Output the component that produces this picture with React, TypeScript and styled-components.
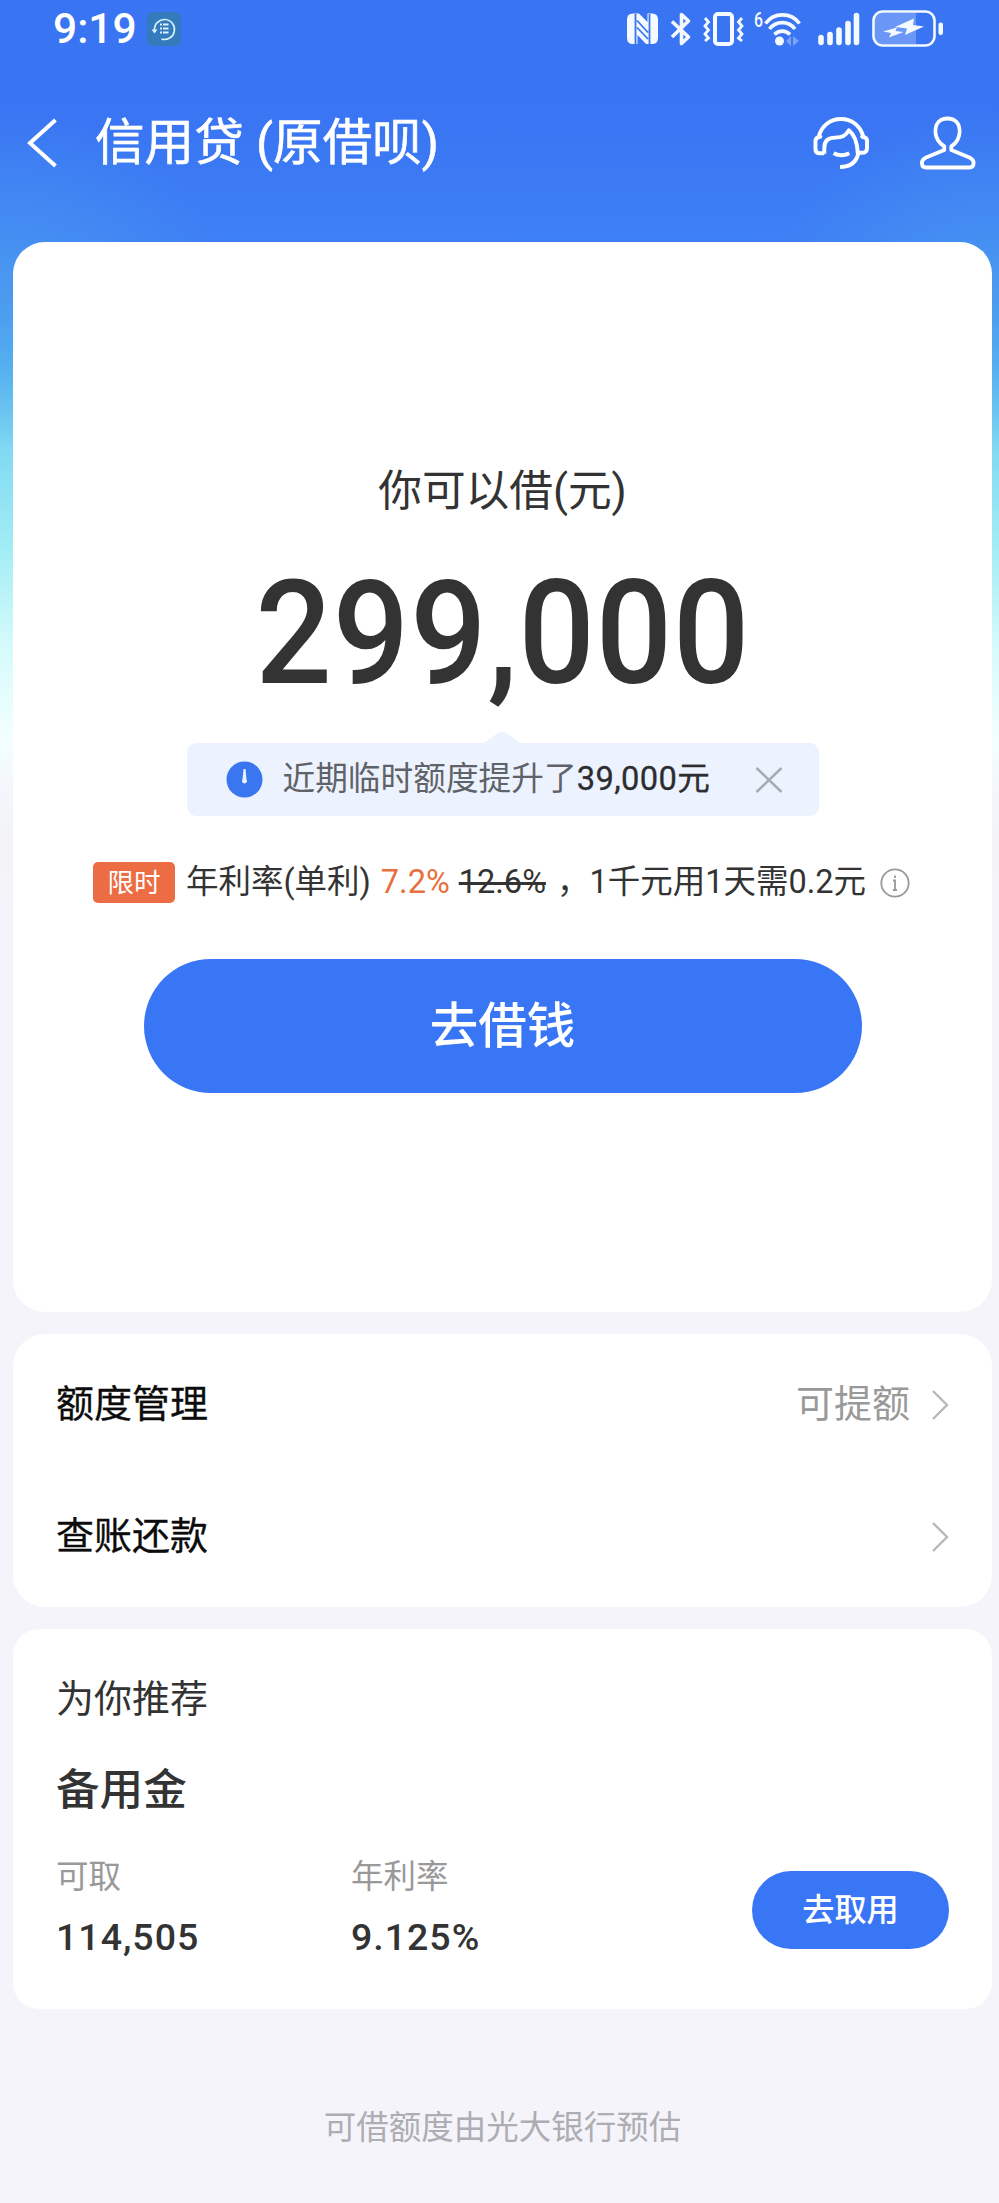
import React from 'react';
import styled, { createGlobalStyle } from 'styled-components';

const Global = createGlobalStyle`
  * { box-sizing: border-box; }
  body {
    margin: 0;
    background: #f4f4fa;
    font-family: Roboto, 'Noto Sans CJK SC', sans-serif;
    color: #333;
  }
  svg { display: block; flex: none; overflow: visible; }
  button { border: 0; padding: 0; background: none; font: inherit; color: inherit; cursor: pointer; }
`;

const Page = styled.main`
  width: 999px;
  height: 2203px;
  overflow: hidden;
  padding: 0 7px 0 13px;
  background:
    radial-gradient(ellipse 220px 170px at 0 280px, rgba(80, 168, 238, 0.5), rgba(80, 168, 238, 0) 100%) no-repeat,
    radial-gradient(ellipse 220px 170px at 100% 280px, rgba(80, 168, 238, 0.5), rgba(80, 168, 238, 0) 100%) no-repeat,
    linear-gradient(
      #3974f3 0, #3a76f3 130px, #3e80f5 242px, #448cf0 290px, #56b0f0 362px, #80daf2 450px,
      #a5eef5 555px, #d5fafb 645px, #f3fffe 740px, #f3f6fb 790px, #f3f3f7 850px, #f4f4fa 900px
    );
`;

const StatusBar = styled.div`
  display: flex;
  align-items: center;
  height: 57px;
  padding-left: 40px;
`;

const Clock = styled.time`
  width: 94px;
  font-size: 42.5px;
  line-height: 57px;
  font-weight: 500;
  color: #fff;
`;

const StatusIcons = styled.div`
  display: flex;
  align-items: center;
  margin-left: 446px;
  color: #f4faff;
`;

const Spaced = styled.span<{ $left: number }>`
  display: block;
  margin-left: ${p => p.$left}px;
`;

const NavBar = styled.header`
  display: flex;
  align-items: center;
  height: 172px;
  padding: 0 16px 0 14px;
  color: #fff;
`;

const NavTitle = styled.h1`
  flex: 1;
  margin: 0 0 0 38px;
  font-size: 49.6px;
  line-height: 58px;
  font-weight: 400;
  -webkit-text-stroke: 0.6px currentColor;
`;

const NavActions = styled.div`
  display: flex;
  gap: 50px;
`;

const Card = styled.section<{ $radius?: number }>`
  background: #fff;
  border-radius: ${p => p.$radius ?? 32}px;
`;

const QuotaCard = styled(Card)`
  display: flex;
  flex-direction: column;
  align-items: center;
  height: 1070px;
  margin-top: 13px;
  padding-top: 219px;
`;

const QuotaLabel = styled.div`
  font-size: 43.7px;
  line-height: 60px;
`;

const Amount = styled.div`
  margin-top: 37px;
  font-size: 145px;
  line-height: 150px;
  font-weight: 500;
  letter-spacing: 1px;
  transform: scaleX(0.927);
`;

const Tip = styled.div`
  position: relative;
  display: flex;
  align-items: center;
  width: 632px;
  height: 73px;
  margin-top: 35px;
  padding: 0 36px 0 39px;
  border-radius: 9px;
  background: #edf3fe;
`;

const TipArrow = styled.svg`
  position: absolute;
  left: 293px;
  top: -12px;
`;

const TipText = styled.div`
  flex: 1;
  margin-left: 20px;
  font-size: 32.7px;
  line-height: 73px;
  color: #5f6268;
  b { font-weight: 400; color: #2c2d30; -webkit-text-stroke: 0.3px currentColor; letter-spacing: 0.4px; }
`;

const RateRow = styled.div`
  display: flex;
  align-items: center;
  height: 43px;
  margin-top: 45px;
  margin-right: 2px;
  font-size: 32.5px;
  line-height: 43px;
  white-space: nowrap;
`;

const Tag = styled.span`
  width: 82px;
  height: 41px;
  margin-right: 11px;
  border-radius: 5px;
  background: #ec6d43;
  color: #fff;
  font-size: 26.5px;
  line-height: 41px;
  text-align: center;
`;

const Rate = styled.span`
  margin-left: 10px;
  color: #e87040;
`;

const OldRate = styled.s`
  margin-left: 9px;
  text-decoration-thickness: 3px;
`;

const Note = styled.span`
  margin: 0 14px 0 11px;
`;

const PillButton = styled.button<{ $size: 'large' | 'small' }>`
  width: ${p => (p.$size === 'large' ? 718 : 197)}px;
  height: ${p => (p.$size === 'large' ? 134 : 78)}px;
  padding-top: ${p => (p.$size === 'large' ? 3 : 0)}px;
  border-radius: 67px;
  background: #3976f5;
  color: #fff;
  font-size: ${p => (p.$size === 'large' ? 48.5 : 32.2)}px;
  line-height: 1.2;
  font-weight: 500;
`;

const BorrowButton = styled(PillButton)`
  margin-top: 55px;
`;

const MenuCard = styled(Card)`
  height: 273px;
  margin-top: 22px;
  padding: 5px 43px 0;
`;

const MenuRow = styled.div`
  display: flex;
  align-items: center;
  height: 132px;
  font-size: 38px;
  line-height: 48px;
  color: #0c0c0c;
`;

const MenuLabel = styled.span`
  flex: 1;
  margin-top: -2px;
  -webkit-text-stroke: 0.3px currentColor;
`;

const MenuValue = styled.span`
  margin: -2px 22px 0 0;
  color: #999;
`;

const OfferCard = styled(Card)`
  height: 380px;
  margin-top: 22px;
  padding: 45px 43px 0;
`;

const OfferHeading = styled.div`
  font-size: 38px;
  line-height: 50px;
`;

const OfferName = styled.h2`
  margin: 37px 0 0;
  font-size: 43.6px;
  line-height: 60px;
  font-weight: 500;
`;

const OfferBody = styled.div`
  display: flex;
  margin-top: 36px;
`;

const Stat = styled.div<{ $width: number }>`
  width: ${p => p.$width}px;
`;

const StatLabel = styled.div`
  font-size: 32.5px;
  line-height: 40px;
  color: #999;
`;

const StatValue = styled.div`
  margin-top: 16px;
  font-size: 37.5px;
  line-height: 48px;
  font-weight: 500;
  letter-spacing: 1px;
`;

const TakeButton = styled(PillButton)`
  margin: 14px 0 0 auto;
`;

const Footer = styled.footer`
  margin-top: 98px;
  font-size: 32.5px;
  line-height: 42px;
  text-align: center;
  color: #adadb2;
`;

const BackIcon = () => (
  <svg width="30" height="50" viewBox="0 0 30 50" fill="none" stroke="currentColor" strokeWidth="4">
    <path d="M28.5 2 3 25l25.500 23" />
  </svg>
);

const AppBadge = () => (
  <svg width="34" height="34" viewBox="0 0 34 34" fill="none" stroke="#d9f2fb" strokeWidth="1.6">
    <rect width="34" height="34" rx="6" fill="#347bbd" stroke="none" />
    <path d="M7.500 18a10 10 0 1 1 7 9" />
    <path d="m4.500 17.500 3 4 3-4Z" fill="#d9f2fb" stroke="none" />
    <path strokeWidth="2" d="M13 12.500h2m1 0h5.500M13 16.500h2m1 0h5.500M13 20.500h2m1 0h5.500" />
  </svg>
);

const NfcIcon = () => (
  <svg width="31" height="32" viewBox="0 0 31 32">
    <path fill="currentColor" d="M6 0.500H12L20.500 9V0.500H25q6 0 6 6V25q0 6-6 6h-6L10.500 22v9H6q-6 0-6-6V6.500q0-6 6-6Z" />
    <path fill="none" stroke="#3975f3" strokeWidth="1.800" d="M8.500 1v30M22.500 1v30M10 7.500 21 19.500M10 14.500 21 26" />
  </svg>
);

const BluetoothIcon = () => (
  <svg width="22" height="34" viewBox="0 0 22 34" fill="none" stroke="currentColor" strokeWidth="3.6" strokeLinejoin="round">
    <path d="M2 9.500 18.500 25 11.500 31.500V2.500l7 6.500L2 25" />
  </svg>
);

const VibrateIcon = () => (
  <svg width="41" height="34" viewBox="0 0 41 34" fill="none" stroke="currentColor">
    <rect x="12" y="2" width="17" height="30" rx="3" strokeWidth="4" />
    <path strokeWidth="2.800" d="m2 6 3.500 4L2 14l3.500 4L2 22l3.500 4L2 29M39 6l-3.500 4 3.500 4-3.500 4 3.500 4-3.500 4 3.500 3" />
  </svg>
);

const WifiIcon = () => (
  <svg width="48" height="36" viewBox="0 0 48 36" fill="none" stroke="currentColor" strokeWidth="3.600">
    <path d="M11.500 12.500a21 21 0 0 1 34 0M15.500 18a16 16 0 0 1 25.500 0M20.500 23.500a10.500 10.500 0 0 1 15.500 0" />
    <circle cx="25.500" cy="30" r="4.500" fill="currentColor" stroke="none" />
    <path fill="currentColor" stroke="none" opacity=".35" d="m37 25-5 5 5 5ZM39 25l6 5-6 5Z" />
    <text x="0" y="16" fontSize="20" fontWeight="500" fill="currentColor" stroke="none" textLength="9" lengthAdjust="spacingAndGlyphs">6</text>
  </svg>
);

const SignalIcon = () => (
  <svg width="42" height="34" viewBox="0 0 42 34" stroke="currentColor" strokeWidth="5.600" strokeLinecap="round">
    <path d="M3 25.500v5M12 22.500v8M21 18v12.500M30 11.500v19M38.500 3.500v27" />
  </svg>
);

const BatteryIcon = () => (
  <svg width="72" height="37" viewBox="0 0 72 37">
    <path fill="#fff" opacity=".25" d="M9 3h35v31H9q-6 0-6-6V9q0-6 6-6Z" />
    <rect x="1.500" y="1.500" width="61" height="34" rx="9" fill="none" stroke="currentColor" strokeWidth="2.600" />
    <rect x="66.500" y="12.500" width="4.500" height="12.500" rx="2.200" fill="currentColor" />
    <path fill="currentColor" d="m11 21.500 8 1.500-2 4.500 14.500-5.500-8-1 1.500-3.500ZM23 17l12 1.500-2 6.500 19-8.500-11-1.500 1-6.500Z" />
  </svg>
);

const ServiceIcon = () => (
  <svg width="57" height="54" viewBox="0 0 58 54" fill="none" stroke="currentColor" strokeWidth="4" strokeLinejoin="round">
    <path d="M6 20C9 9 18 2.500 28.500 2.500S48 9 51 20M11.500 37.500H7q-4.500 0-4.500-4.500v-8Q2.500 21 7 21l1-2M11.500 38v-6q0-10.500 11-10.500c7 0 10-1 14-7.500 5 4 8.500 10 9 23h4q5.500 0 5.500-5v-7q0-4-4.500-4l-1-2M46 38c-2 8.500-8 13.500-18.500 13.500M21 37.500q8 4 16 0" />
  </svg>
);

const UserIcon = () => (
  <svg width="56" height="54" viewBox="0 0 60 54" preserveAspectRatio="none" fill="none" stroke="currentColor" strokeWidth="4" strokeLinejoin="round">
    <path d="M26 34v-3.500C20 26.500 16.500 21 16.500 15.500c0-8 5-13 13-13s13 5 13 13c0 5.500-3 11-9 15V34l19.500 7.500q4.500 2 4.500 5.500 0 4.500-5 4.500h-46Q2 51.500 2 47q0-3.500 4.500-5.500Z" />
  </svg>
);

const AlertIcon = () => (
  <svg width="37" height="37" viewBox="0 0 37 37">
    <circle cx="18.500" cy="18.500" r="18" fill="#3976f0" />
    <path d="M17.500 8h2l1 10.500a2.500 2.500 0 1 1-4 0Z" fill="#e9f2ff" />
  </svg>
);

const CloseIcon = () => (
  <svg width="28" height="28" viewBox="0 0 28 28" stroke="#a6abb4" strokeWidth="2.600">
    <path d="m1.500 2 25 24M26.500 2l-25 24" />
  </svg>
);

const InfoIcon = () => (
  <svg width="30" height="30" viewBox="0 0 30 30" fill="none" stroke="#999" strokeWidth="1.800">
    <circle cx="15" cy="15" r="13.700" />
    <path d="M13 12.500h2v9.500M15 7.500v2.500M13 22h4" />
  </svg>
);

const ChevronIcon = () => (
  <svg width="17" height="30" viewBox="0 0 17 30" fill="none" stroke="#b8b8b8" strokeWidth="2.400">
    <path d="m1 1 14 14L1 29" />
  </svg>
);

export default function App() {
  return (
    <Page>
      <Global />
      <StatusBar>
        <Clock>9:19</Clock>
        <AppBadge />
        <StatusIcons>
          <NfcIcon />
          <Spaced $left={12}><BluetoothIcon /></Spaced>
          <Spaced $left={11}><VibrateIcon /></Spaced>
          <Spaced $left={10}><WifiIcon /></Spaced>
          <Spaced $left={16}><SignalIcon /></Spaced>
          <Spaced $left={12}><BatteryIcon /></Spaced>
        </StatusIcons>
      </StatusBar>
      <NavBar>
        <BackIcon />
        <NavTitle>信用贷 (原借呗)</NavTitle>
        <NavActions>
          <ServiceIcon />
          <UserIcon />
        </NavActions>
      </NavBar>
      <QuotaCard>
        <QuotaLabel>你可以借(元)</QuotaLabel>
        <Amount>299,000</Amount>
        <Tip>
          <TipArrow width="44" height="13" viewBox="0 0 44 13">
            <path d="M0 13Q5 12 8 9L18 2q4-3 8 0l10 7q3 3 8 4Z" fill="#edf3fe" />
          </TipArrow>
          <AlertIcon />
          <TipText>近期临时额度提升了<b>39,000元</b></TipText>
          <CloseIcon />
        </Tip>
        <RateRow>
          <Tag>限时</Tag>
          <span>年利率(单利)</span>
          <Rate>7.2%</Rate>
          <OldRate>12.6%</OldRate>
          <Note>，1千元用1天需0.2元</Note>
          <InfoIcon />
        </RateRow>
        <BorrowButton $size="large">去借钱</BorrowButton>
      </QuotaCard>
      <MenuCard>
        <MenuRow>
          <MenuLabel>额度管理</MenuLabel>
          <MenuValue>可提额</MenuValue>
          <ChevronIcon />
        </MenuRow>
        <MenuRow>
          <MenuLabel>查账还款</MenuLabel>
          <ChevronIcon />
        </MenuRow>
      </MenuCard>
      <OfferCard $radius={26}>
        <OfferHeading>为你推荐</OfferHeading>
        <OfferName>备用金</OfferName>
        <OfferBody>
          <Stat $width={295}>
            <StatLabel>可取</StatLabel>
            <StatValue>114,505</StatValue>
          </Stat>
          <Stat $width={200}>
            <StatLabel>年利率</StatLabel>
            <StatValue>9.125%</StatValue>
          </Stat>
          <TakeButton $size="small">去取用</TakeButton>
        </OfferBody>
      </OfferCard>
      <Footer>可借额度由光大银行预估</Footer>
    </Page>
  );
}
